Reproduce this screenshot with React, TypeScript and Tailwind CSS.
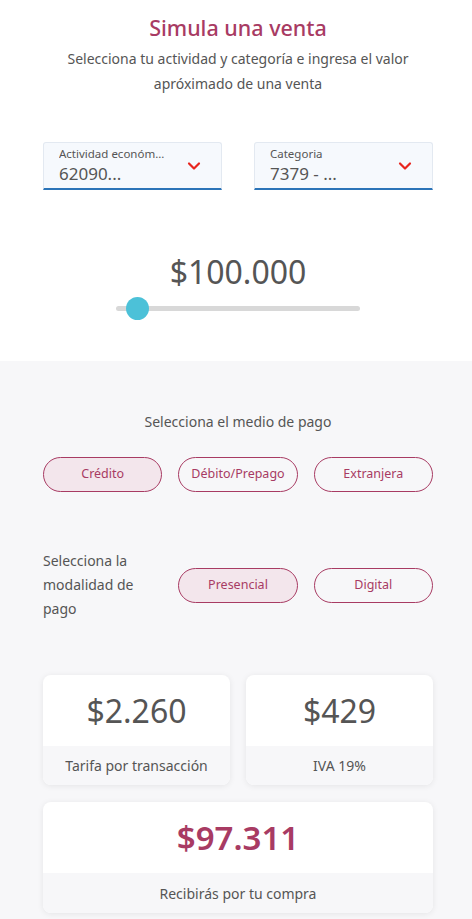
import { useState } from "react";

const font = { fontFamily: '"Noto Sans", "Open Sans", sans-serif' };

function Chevron() {
  return (
    <svg width="14" height="10" viewBox="0 0 14 10" fill="none">
      <path d="M2 2.5 7 7.5 12 2.5" stroke="#e8251e" strokeWidth="2.2" strokeLinecap="round" strokeLinejoin="round" />
    </svg>
  );
}

function SelectBox({ label, value }: { label: string; value: string }) {
  return (
    <div className="flex h-[48px] items-center justify-between gap-2 rounded-t-[3px] border border-b-2 border-[#e3e9f1] border-b-[#2b74b8] bg-[#f6f9fd] pl-[15px] pr-[20px]">
      <div className="flex min-w-0 flex-col">
        <span className="truncate text-[11.5px] leading-[16px] text-[#555]">{label}</span>
        <span className="text-[17px] leading-[23px] text-[#555]">{value}</span>
      </div>
      <div className="shrink-0">
        <Chevron />
      </div>
    </div>
  );
}

function Pill({ text, active, onClick }: { text: string; active: boolean; onClick: () => void }) {
  return (
    <button
      onClick={onClick}
      className={
        "h-[35px] rounded-full border border-[#a83b63] text-[12.5px] text-[#a83b63] " +
        (active ? "bg-[#f3e6ec]" : "bg-transparent")
      }
    >
      {text}
    </button>
  );
}

export default function App() {
  const [medio, setMedio] = useState("Crédito");
  const [modo, setModo] = useState("Presencial");

  return (
    <div className="h-[919px] overflow-hidden bg-[#f7f7f9]" style={font}>
      <section className="bg-white pb-[50px] pl-[43px] pr-[39px] pt-[14px]">
        <h1 className="text-center text-[21.5px] font-medium leading-[28px] text-[#a83b63]">Simula una venta</h1>
        <p className="mx-auto mt-[4px] max-w-[360px] text-center text-[14px] leading-[25px] text-[#555]">
          Selecciona tu actividad y categoría e ingresa el valor apróximado de una venta
        </p>

        <div className="mt-[46px] grid grid-cols-2 gap-[32px]">
          <SelectBox label="Actividad económ..." value="62090..." />
          <SelectBox label="Categoria" value="7379 - ..." />
        </div>

        <div className="mt-[62px] text-center text-[32px] leading-[40px] text-[#555]">$100.000</div>
        <div className="relative mx-auto mt-[14px] h-[5px] w-[244px] rounded-full bg-[#d8d8d8]">
          <div className="absolute left-[10px] top-[-9px] h-[23px] w-[23px] rounded-full bg-[#4cc1d8]" />
        </div>
      </section>

      <section className="pl-[43px] pr-[39px] pt-[49px]">
        <p className="text-center text-[14px] leading-[24px] text-[#555]">Selecciona el medio de pago</p>

        <div className="mt-[23px] grid grid-cols-3 gap-[16px]">
          {["Crédito", "Débito/Prepago", "Extranjera"].map((t) => (
            <Pill key={t} text={t} active={medio === t} onClick={() => setMedio(t)} />
          ))}
        </div>

        <div className="mt-[57px] grid grid-cols-3 items-center gap-[16px]">
          <p className="text-[14px] leading-[24px] text-[#555]">Selecciona la modalidad de pago</p>
          {["Presencial", "Digital"].map((t) => (
            <Pill key={t} text={t} active={modo === t} onClick={() => setModo(t)} />
          ))}
        </div>

        <div className="mt-[54px] grid grid-cols-2 gap-[16px]">
          {[
            ["$2.260", "Tarifa por transacción"],
            ["$429", "IVA 19%"],
          ].map(([v, l]) => (
            <div key={l} className="overflow-hidden rounded-[8px] bg-white shadow-[0_1px_6px_rgba(0,0,0,0.08)]">
              <div className="flex h-[71px] items-center justify-center text-[32px] text-[#555]">{v}</div>
              <div className="flex h-[39px] items-center justify-center bg-[#f7f7f9] text-[14px] text-[#555]">{l}</div>
            </div>
          ))}
        </div>

        <div className="mt-[17px] overflow-hidden rounded-[8px] bg-white shadow-[0_1px_6px_rgba(0,0,0,0.08)]">
          <div className="flex h-[71px] items-center justify-center text-[33px] font-semibold text-[#a83b63]">$97.311</div>
          <div className="flex h-[40px] items-center justify-center bg-[#f7f7f9] text-[14px] text-[#555]">
            Recibirás por tu compra
          </div>
        </div>
      </section>
    </div>
  );
}
